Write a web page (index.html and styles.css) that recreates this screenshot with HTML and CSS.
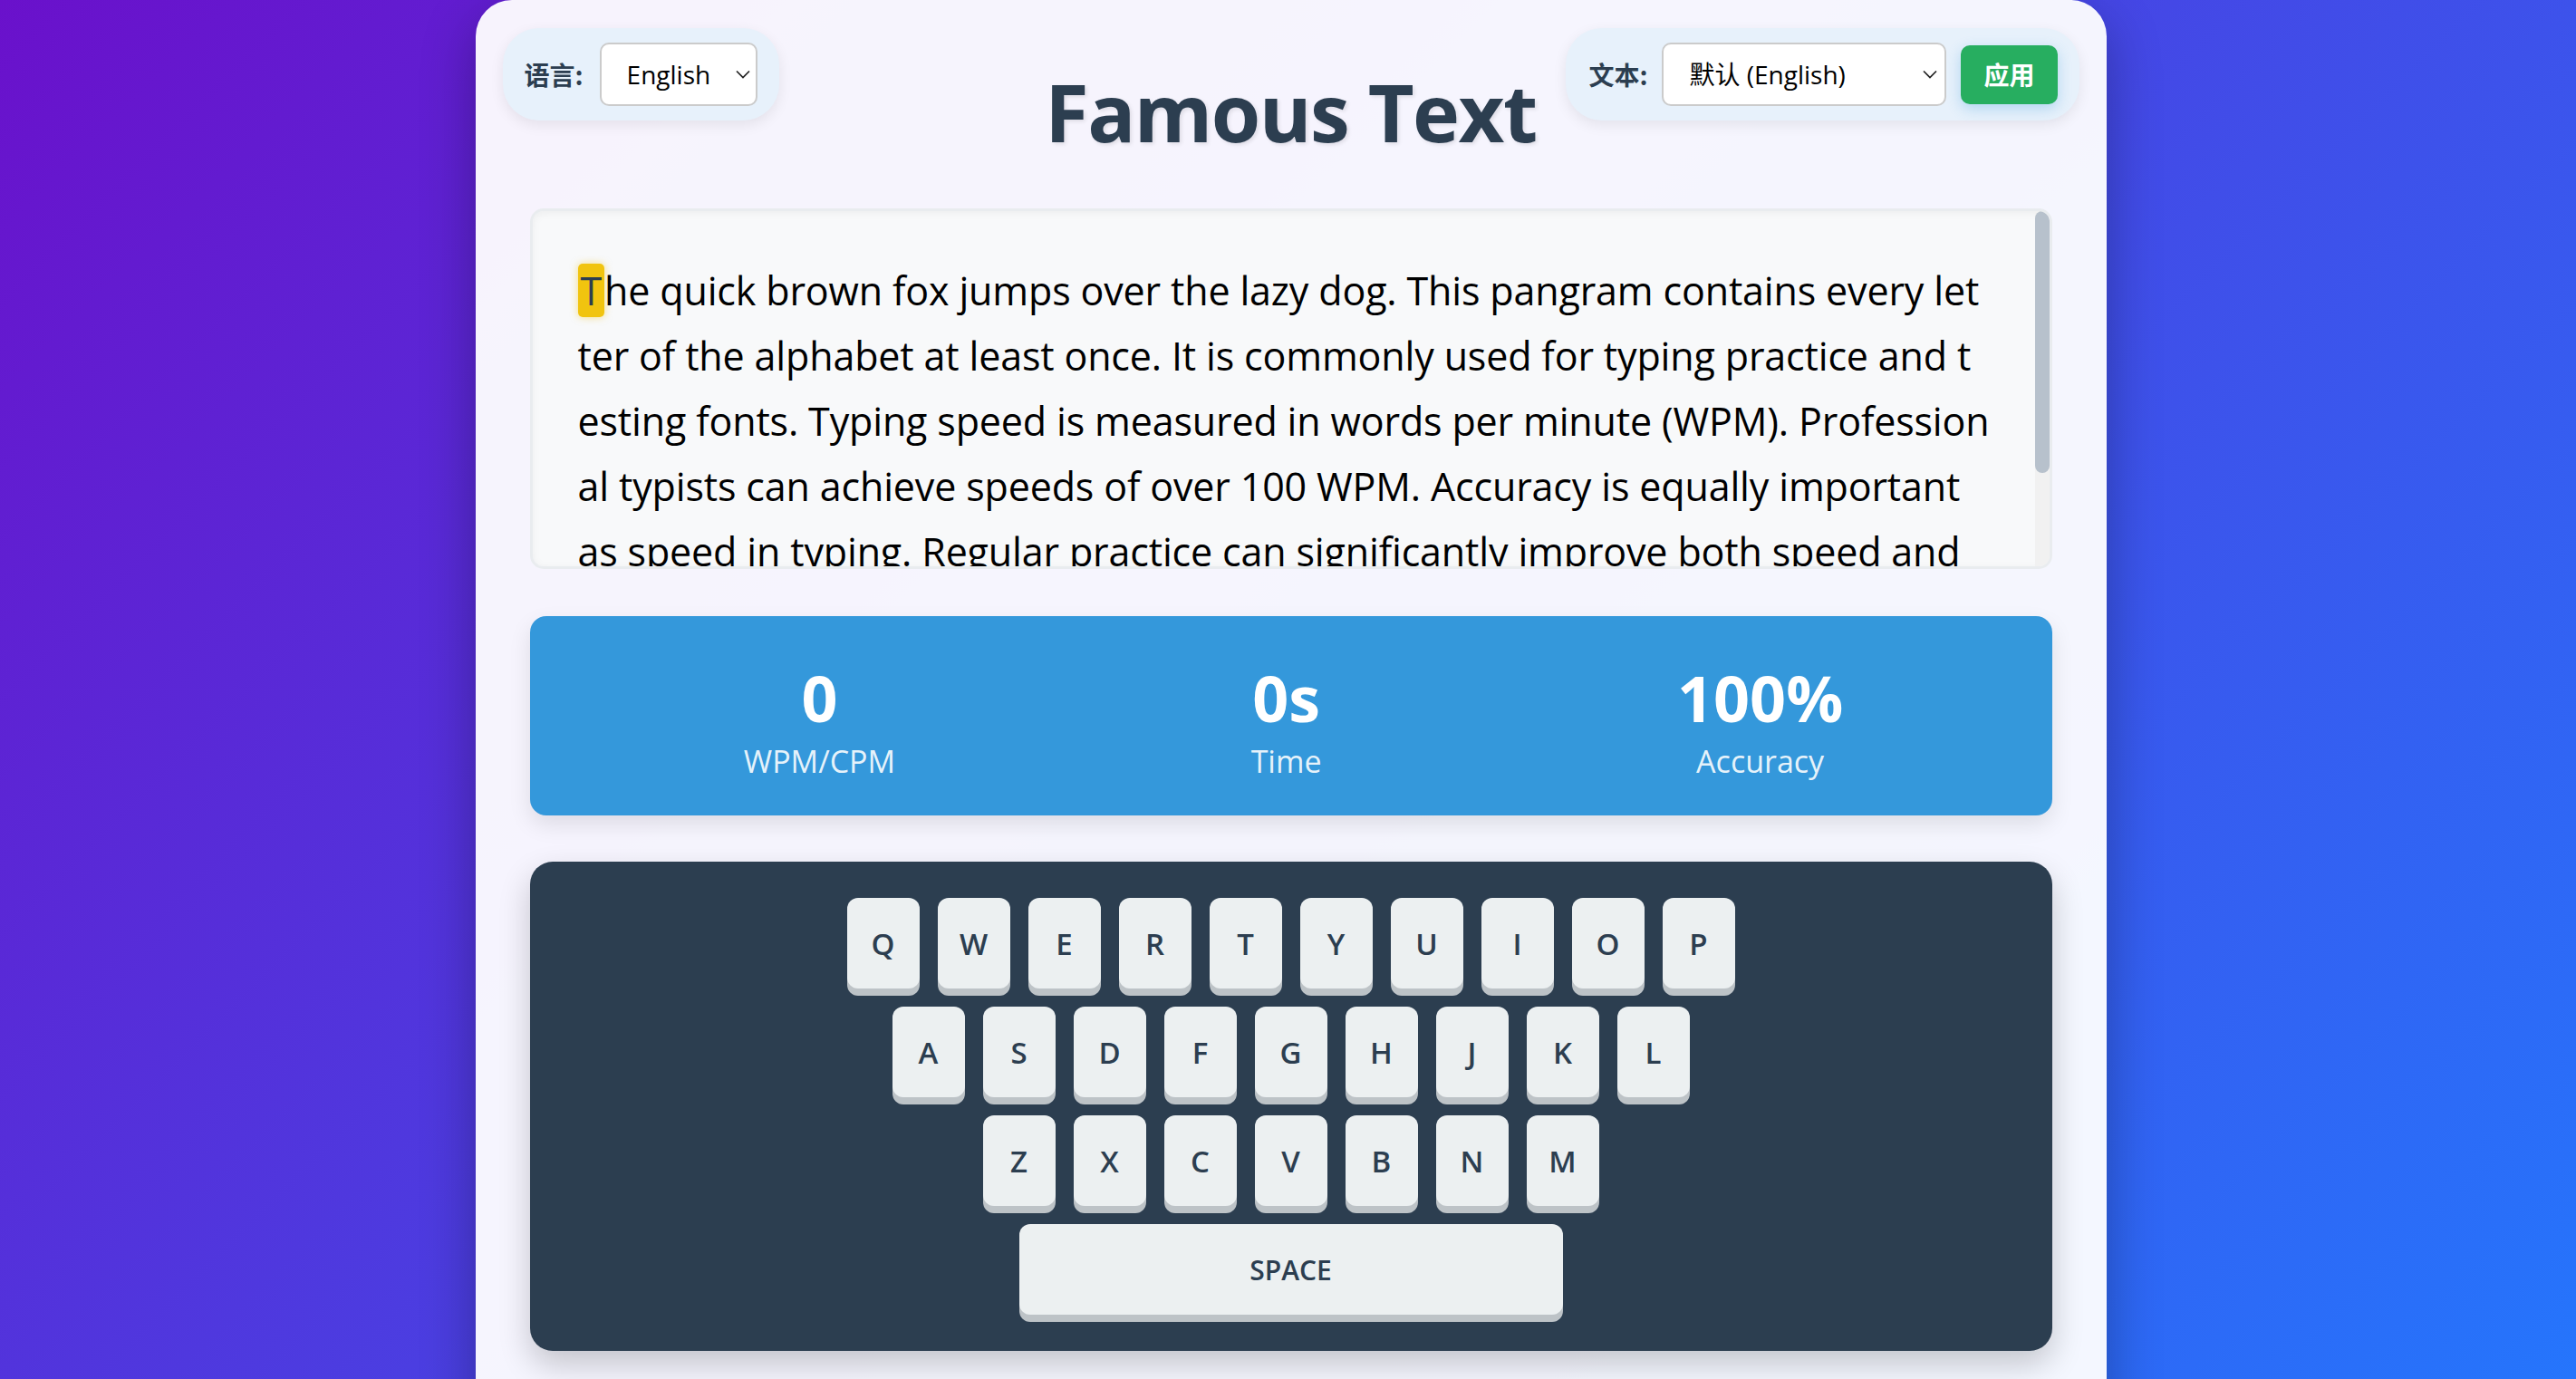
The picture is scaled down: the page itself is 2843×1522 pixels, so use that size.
FILE: index.html
```html
<!DOCTYPE html>
<html lang="en">
<head>
<meta charset="utf-8">
<title>Famous Text</title>
<link rel="stylesheet" href="styles.css">
</head>
<body>
<div class="app">
  <header class="header">
    <div class="pill pill-left">
      <label class="pill-label" for="lang">语言:</label>
      <div class="select-wrap select-lang">
        <select id="lang" class="select">
          <option>English</option>
          <option>中文</option>
        </select>
        <svg class="chev" viewBox="0 0 16 10" aria-hidden="true"><path d="M1 1.5 L8 8.5 L15 1.5" fill="none" stroke="#1f1f1f" stroke-width="1.7"/></svg>
      </div>
    </div>
    <h1 class="title">Famous Text</h1>
    <div class="pill pill-right">
      <label class="pill-label" for="src">文本:</label>
      <div class="select-wrap select-text">
        <select id="src" class="select">
          <option>默认 (English)</option>
        </select>
        <svg class="chev" viewBox="0 0 16 10" aria-hidden="true"><path d="M1 1.5 L8 8.5 L15 1.5" fill="none" stroke="#1f1f1f" stroke-width="1.7"/></svg>
      </div>
      <button class="apply" type="button">应用</button>
    </div>
  </header>

  <section class="text-box">
    <p class="text"><span class="current">T</span>he quick brown fox jumps over the lazy dog. This pangram contains every let<br>ter of the alphabet at least once. It is commonly used for typing practice and t<br>esting fonts. Typing speed is measured in words per minute (WPM). Profession<br>al typists can achieve speeds of over 100 WPM. Accuracy is equally important<br>as speed in typing. Regular practice can significantly improve both speed and<br>accuracy.</p>
    <div class="scrollbar" aria-hidden="true"><div class="scroll-thumb"></div></div>
  </section>

  <section class="stats">
    <div class="stat">
      <div class="stat-value">0</div>
      <div class="stat-label">WPM/CPM</div>
    </div>
    <div class="stat">
      <div class="stat-value">0s</div>
      <div class="stat-label">Time</div>
    </div>
    <div class="stat">
      <div class="stat-value">100%</div>
      <div class="stat-label">Accuracy</div>
    </div>
  </section>

  <section class="keyboard">
    <div class="row">
      <div class="key">Q</div><div class="key">W</div><div class="key">E</div><div class="key">R</div><div class="key">T</div><div class="key">Y</div><div class="key">U</div><div class="key">I</div><div class="key">O</div><div class="key">P</div>
    </div>
    <div class="row">
      <div class="key">A</div><div class="key">S</div><div class="key">D</div><div class="key">F</div><div class="key">G</div><div class="key">H</div><div class="key">J</div><div class="key">K</div><div class="key">L</div>
    </div>
    <div class="row">
      <div class="key">Z</div><div class="key">X</div><div class="key">C</div><div class="key">V</div><div class="key">B</div><div class="key">N</div><div class="key">M</div>
    </div>
    <div class="row">
      <div class="key key-space">SPACE</div>
    </div>
  </section>
</div>
</body>
</html>
```

FILE: styles.css
```css
html, body {
  height: 100%;
}

body {
  margin: 0;
  padding: 0 0 0 6px;
  box-sizing: border-box;
  overflow: hidden;
  background: linear-gradient(135deg, #6a11cb 0%, #2575fc 100%);
  font-family: "Open Sans", "Noto Sans CJK SC", sans-serif;
}

.app {
  max-width: 1800px;
  min-height: 1700px;
  margin: 0 auto;
  box-sizing: border-box;
  padding: 31px 30px 60px;
  background: rgba(255, 255, 255, 0.95);
  border-radius: 40px;
  box-shadow: 0 20px 60px rgba(0, 0, 0, 0.3);
}

/* ---------- header ---------- */
.header {
  display: grid;
  grid-template-columns: 1fr auto 1fr;
  align-items: start;
}

.pill {
  display: inline-flex;
  align-items: center;
  gap: 18px;
  padding: 16px 24px;
  background: #e7f1fb;
  border-radius: 40px;
  box-shadow: 0 5px 15px rgba(0, 0, 0, 0.08);
}

.pill-left {
  justify-self: start;
}

.pill-right {
  justify-self: end;
  gap: 16px;
  padding-left: 25px;
}

.pill-label {
  font-family: "Noto Sans CJK SC", sans-serif;
  font-size: 28px;
  font-weight: 700;
  color: #2c3e50;
}

.select-wrap {
  position: relative;
  display: flex;
}

.select {
  -webkit-appearance: none;
  appearance: none;
  height: 70px;
  box-sizing: border-box;
  border: 2px solid #cbcbcb;
  border-radius: 10px;
  background: #fff;
  color: #000;
  font-family: "Open Sans", "Noto Sans CJK SC", sans-serif;
  font-size: 28px;
  padding: 0 40px 0 28px;
  outline: none;
}

.select-lang .select {
  width: 174px;
}

.select-text .select {
  width: 314px;
}

.chev {
  position: absolute;
  right: 8px;
  top: 50%;
  width: 16px;
  height: 10px;
  margin-top: -5px;
  pointer-events: none;
}

.select-text .chev {
  right: 10px;
}

.apply {
  height: 65px;
  padding: 0 25px;
  border: none;
  border-radius: 10px;
  background: #27ae60;
  color: #fff;
  font-family: "Noto Sans CJK SC", sans-serif;
  font-size: 28px;
  font-weight: 700;
  box-shadow: 0 5px 15px rgba(52, 152, 219, 0.3);
}

.title {
  margin: 48px 0 0;
  font-family: "Open Sans", sans-serif;
  font-size: 88px;
  font-weight: 700;
  letter-spacing: -1.5px;
  line-height: 1;
  color: #2c3e50;
  text-shadow: 2px 2px 4px rgba(0, 0, 0, 0.1);
  white-space: nowrap;
}

/* ---------- text ---------- */
.text-box {
  position: relative;
  margin: 63px 30px 0;
  height: 398px;
  box-sizing: border-box;
  border: 3px solid #e9ecef;
  border-radius: 15px;
  background: #f8f9fa;
  padding: 52px 66px 50px 50px;
  overflow: hidden;
  box-shadow: inset 0 2px 10px rgba(0, 0, 0, 0.05);
}

.text {
  margin: 0;
  font-size: 43px;
  line-height: 72px;
  letter-spacing: -0.15px;
  white-space: nowrap;
  color: #000;
}

.current {
  padding: 0 3px;
  background: #f1c40f;
  color: #2c3e50;
  border-radius: 5px;
  box-shadow: 0 0 8px rgba(241, 196, 15, 0.5);
}

.scrollbar {
  position: absolute;
  top: 0;
  right: 0;
  bottom: 0;
  width: 16px;
  background: #f1f1f1;
}

.scroll-thumb {
  height: 289px;
  border-radius: 8px;
  background: #b7c1cc;
}

/* ---------- stats ---------- */
.stats {
  margin: 52px 30px 0;
  height: 220px;
  box-sizing: border-box;
  padding: 48px 34px 0 40px;
  display: flex;
  justify-content: space-around;
  align-items: flex-start;
  background: #3498db;
  border-radius: 18px;
  color: #fff;
  box-shadow: 0 10px 25px rgba(0, 0, 0, 0.1);
}

.stat {
  display: flex;
  flex-direction: column;
  align-items: center;
}

.stat-value {
  font-size: 70px;
  font-weight: 700;
  line-height: 84px;
}

.stat-label {
  margin-top: 8px;
  font-size: 34px;
  line-height: 41px;
  color: rgba(255, 255, 255, 0.9);
}

/* ---------- keyboard ---------- */
.keyboard {
  margin: 51px 30px 0;
  padding: 40px;
  display: flex;
  flex-direction: column;
  align-items: center;
  gap: 20px;
  background: #2c3e50;
  border-radius: 25px;
  box-shadow: 0 15px 35px rgba(0, 0, 0, 0.2);
}

.row {
  display: flex;
  gap: 20px;
}

.key {
  width: 80px;
  height: 100px;
  display: flex;
  align-items: center;
  justify-content: center;
  background: #ecf0f1;
  border-radius: 12px;
  box-shadow: 0 8px 0 #bdc3c7;
  color: #2c3e50;
  font-size: 33px;
  font-weight: 600;
}

.key-space {
  width: 600px;
  font-size: 30px;
}
```
